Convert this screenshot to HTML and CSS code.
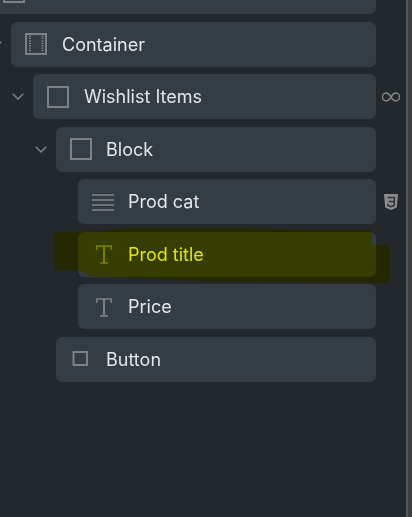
FILE: index.html
```
<!DOCTYPE html>
<html lang="en">
<head>
<meta charset="utf-8">
<title>Structure panel</title>
<link rel="stylesheet" href="styles.css">
</head>
<body>
<div class="shell">
  <main class="panel">
    <ul class="tree">
      <li class="item depth-0">
        <span class="caret"></span>
        <div class="row"><svg class="icon" viewBox="0 0 22 22"><rect class="line" x="1" y="1" width="20" height="20"/></svg></div>
        <span class="gutter"></span>
      </li>
      <li class="item depth-1">
        <span class="caret"><svg class="chevron" viewBox="0 0 12 7"><path d="M.7.7 6 6 11.3.7"/></svg></span>
        <div class="row">
          <svg class="icon" viewBox="0 0 22 22"><rect class="line" x="1" y="1" width="20" height="20"/><path class="dots" d="M5 2.500v17M17.500 2.500v17"/></svg>
          <span class="label">Container</span>
        </div>
        <span class="gutter"></span>
      </li>
      <li class="item depth-2">
        <span class="caret"><svg class="chevron" viewBox="0 0 12 7"><path d="M.7.7 6 6 11.3.7"/></svg></span>
        <div class="row">
          <svg class="icon" viewBox="0 0 22 22"><rect class="line" x="1" y="1" width="20" height="20"/></svg>
          <span class="label">Wishlist Items</span>
        </div>
        <span class="gutter"><svg class="infinity" viewBox="0 0 18 10"><path d="M9 5C7.500 2.300 6.200 1 4.400 1a4 4 0 0 0 0 8C6.200 9 7.500 7.700 9 5s2.800-4 4.600-4a4 4 0 0 1 0 8C11.800 9 10.500 7.700 9 5Z"/></svg></span>
      </li>
      <li class="item depth-3">
        <span class="caret"><svg class="chevron" viewBox="0 0 12 7"><path d="M.7.7 6 6 11.3.7"/></svg></span>
        <div class="row">
          <svg class="icon" viewBox="0 0 22 22"><rect class="line" x="1" y="1" width="20" height="20"/></svg>
          <span class="label">Block</span>
        </div>
        <span class="gutter"></span>
      </li>
      <li class="item depth-4">
        <span class="caret"></span>
        <div class="row">
          <svg class="icon" viewBox="0 0 22 22"><path class="rules" d="M0 4h22M0 9h22M0 14h22M0 19h22"/></svg>
          <span class="label">Prod cat</span>
        </div>
        <span class="gutter"><svg class="css3" viewBox="0 0 14 16"><path class="shield" d="M0 0h14l-1.200 13.600L7 16l-5.800-2.400Z"/><path class="three" d="M3.500 3.500h7l-.5 8-3 1.200-3-1.200-.1-1.800M4.500 7.500H10"/></svg></span>
      </li>
      <li class="item depth-4">
        <span class="caret"></span>
        <div class="row">
          <svg class="icon" viewBox="0 0 22 22"><path class="serif" d="M4.800 7V3h14.400v4M8 20h8"/><path class="stem" d="M12 3v17"/></svg>
          <span class="label">Prod title</span>
        </div>
        <span class="gutter"></span>
      </li>
      <li class="item depth-4">
        <span class="caret"></span>
        <div class="row">
          <svg class="icon" viewBox="0 0 22 22"><path class="serif" d="M4.800 7V3h14.400v4M8 20h8"/><path class="stem" d="M12 3v17"/></svg>
          <span class="label">Price</span>
        </div>
        <span class="gutter"></span>
      </li>
      <li class="item depth-3">
        <span class="caret"></span>
        <div class="row">
          <svg class="icon" viewBox="0 0 22 22"><rect class="line" x="3.500" y="4" width="13.500" height="13"/></svg>
          <span class="label">Button</span>
        </div>
        <span class="gutter"></span>
      </li>
    </ul>
  </main>
  <div class="edge"></div>
</div>
<svg class="marker" viewBox="0 0 412 517"><path d="M54 232 100 231 130 228 250 228 300 230 372 230 372 245 389 245 389 283 340 283 200 281 117 277 90 276 78 270 54 270Z"/></svg>
</body>
</html>
```

FILE: styles.css
```
* {
  box-sizing: border-box;
}

html,
body {
  height: 100%;
  margin: 0;
  overflow: hidden;
  background: #23282c;
}

body {
  position: relative;
  font-family: Inter, "Liberation Sans", sans-serif;
}

.shell {
  display: flex;
  height: 100%;
}

.panel {
  flex: 1;
  min-width: 0;
  background: #23282c;
  border-right: 2px solid #505b63;
  overflow: hidden;
}

.edge {
  width: 4px;
  background: #3c3d3d;
}

.tree {
  display: flex;
  flex-direction: column;
  gap: 7.5px;
  list-style: none;
  margin: -31px 0 0;
  padding: 0;
}

.item {
  display: flex;
  align-items: center;
}

.depth-0 { margin-left: -33px; }
.depth-1 { margin-left: -11px; }
.depth-2 { margin-left: 11px; }
.depth-3 { margin-left: 34px; }
.depth-4 { margin-left: 56px; }

.depth-1 .row,
.depth-2 .row {
  gap: 15px;
}

.caret {
  flex: 0 0 22px;
  display: flex;
  padding-left: 1px;
}

.chevron {
  width: 12px;
  height: 7px;
  fill: none;
  stroke: #7d8286;
  stroke-width: 1.5;
}

.row {
  flex: 1;
  display: flex;
  align-items: center;
  gap: 14px;
  height: 45px;
  padding-left: 14px;
  background: #353d44;
  border-radius: 6px;
}

.icon {
  flex: 0 0 22px;
  width: 22px;
  height: 22px;
  fill: none;
}

.line {
  stroke: #7c8185;
  stroke-width: 2;
}

.dots {
  stroke: #868b8f;
  stroke-width: 2;
  stroke-dasharray: 1.2 1.2;
}

.rules {
  stroke: #80858a;
  stroke-width: 1.500;
}

.serif {
  stroke: #7c8185;
  stroke-width: 1.500;
}

.stem {
  stroke: #7c8185;
  stroke-width: 2;
}

.label {
  margin-top: 1px;
  font-size: 18px;
  line-height: 1;
  color: #e3e7ea;
}

.gutter {
  flex: 0 0 30px;
  display: flex;
  justify-content: center;
}

.infinity {
  width: 18px;
  height: 10px;
  fill: none;
  stroke: #84888b;
  stroke-width: 1.500;
}

.css3 {
  width: 14px;
  height: 16px;
}

.shield {
  fill: #8a8d90;
}

.three {
  fill: none;
  stroke: #2d3236;
  stroke-width: 1.500;
}

.marker {
  position: absolute;
  inset: 0;
  width: 412px;
  height: 517px;
  mix-blend-mode: multiply;
  pointer-events: none;
}

.marker path {
  fill: #ffff00;
}
```
